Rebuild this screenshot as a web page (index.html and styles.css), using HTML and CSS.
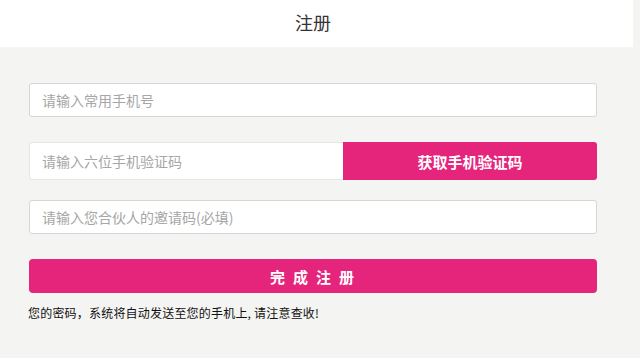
FILE: index.html
```html
<!DOCTYPE html>
<html lang="zh-CN">
<head>
<meta charset="utf-8">
<title>注册</title>
<link rel="stylesheet" href="styles.css">
</head>
<body>
<div class="page">
  <header class="header">注册</header>
  <form class="form">
    <input class="field field-phone" type="text" placeholder="请输入常用手机号">
    <div class="code-row">
      <input class="field field-code" type="text" placeholder="请输入六位手机验证码">
      <button type="button" class="code-btn">获取手机验证码</button>
    </div>
    <input class="field field-invite" type="text" placeholder="请输入您合伙人的邀请码(必填)">
    <button type="button" class="submit-btn">完成注册</button>
    <p class="note">您的密码，系统将自动发送至您的手机上, 请注意查收!</p>
  </form>
</div>
</body>
</html>
```

FILE: styles.css
```css
html, body {
  margin: 0;
  padding: 0;
  background: #f4f4f2;
  font-family: "Noto Sans CJK SC", "Liberation Sans", sans-serif;
}
.page {
  width: 633px;
}
.header {
  height: 47px;
  background: #ffffff;
  display: flex;
  align-items: center;
  justify-content: center;
  font-size: 18px;
  color: #333333;
  padding: 0 7px 4px 0;
  box-sizing: border-box;
}
.form {
  margin: 36px 0 0 29px;
  width: 568px;
  display: flex;
  flex-direction: column;
}
.field {
  box-sizing: border-box;
  height: 34px;
  border: 1px solid #d6d6d6;
  border-radius: 3px;
  background: #ffffff;
  padding: 0 12px;
  font-size: 14px;
  font-family: inherit;
  color: #333;
  outline: none;
}
.field::placeholder {
  color: #a6a6a6;
}
.code-row {
  display: flex;
  margin-top: 25px;
  height: 38px;
}
.field-code {
  height: 38px;
  width: 314px;
  border-color: #e6e6e6;
  border-right: none;
  border-radius: 3px 0 0 3px;
}
.code-btn {
  flex: 1;
  border: none;
  background: #e5247b;
  color: #ffffff;
  font-family: inherit;
  font-size: 15px;
  font-weight: bold;
  border-radius: 0 3px 3px 0;
  padding: 0;
}
.field-invite {
  margin-top: 20px;
  height: 34px;
}
.submit-btn {
  margin-top: 25px;
  height: 34px;
  border: none;
  border-radius: 4px;
  background: #e5247b;
  color: #ffffff;
  font-family: inherit;
  font-size: 15px;
  font-weight: bold;
  letter-spacing: 8px;
  padding: 0 0 0 6px;
}
.note {
  margin: 12px 0 0 -1px;
  font-size: 12px;
  color: #111111;
  line-height: 16px;
  letter-spacing: 0.2px;
}
```
